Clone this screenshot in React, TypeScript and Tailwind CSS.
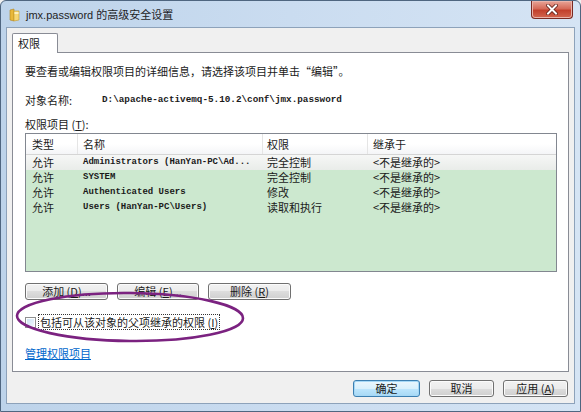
import React from "react";

const cjk = "font-['Noto_Sans_CJK_SC','Noto_Sans',sans-serif]";
const mono = "font-['Liberation_Mono','Noto_Sans_CJK_SC',monospace]";

const rows = [
  { type: "允许", name: "Administrators (HanYan-PC\\Ad...", perm: "完全控制", from: "<不是继承的>" },
  { type: "允许", name: "SYSTEM", perm: "完全控制", from: "<不是继承的>" },
  { type: "允许", name: "Authenticated Users", perm: "修改", from: "<不是继承的>" },
  { type: "允许", name: "Users (HanYan-PC\\Users)", perm: "读取和执行", from: "<不是继承的>" },
];

function WinButton({
  children,
  width,
  primary,
}: {
  children: React.ReactNode;
  width: string;
  primary?: boolean;
}) {
  return (
    <div
      className={`${width} h-[17px] rounded-[3px] border ${
        primary ? "border-[#3c7fb1] shadow-[inset_0_0_0_1px_#a6d8f6]" : "border-[#707070] shadow-[inset_0_0_0_1px_#fbfbfb]"
      } flex items-center justify-center text-[11px] leading-none text-[#1a1a1a] ${
        primary
          ? "bg-[linear-gradient(#eaf6fd_0%,#d9f0fc_50%,#bee6fd_50%,#a7d9f5_100%)]"
          : "bg-[linear-gradient(#f2f2f2_0%,#ebebeb_50%,#dddddd_50%,#cfcfcf_100%)]"
      }`}
    >
      {children}
    </div>
  );
}

function FolderIcon() {
  return (
    <svg width="12" height="14" viewBox="0 0 12 14">
      <path d="M1 2 L5 1 L5 13 L1 12 Z" fill="#e9b83a" stroke="#b08320" strokeWidth="0.6" />
      <path d="M5 3 L10 3 L10 12 L5 13 Z" fill="#f7d774" stroke="#c49a2c" strokeWidth="0.6" />
      <path d="M5.5 4 L9.5 4 L9.5 6 L5.5 6 Z" fill="#fdf0c0" />
    </svg>
  );
}

export default function App() {
  return (
    <div className={`w-[581px] h-[412px] overflow-hidden bg-[#f0f0f0] ${cjk}`}>
      <div className="w-full h-full flex flex-col rounded-t-[6px] border border-[#4f6680] bg-[linear-gradient(90deg,#bdd3ea_0%,#cadcf0_50%,#d5e4f4_100%)]">
        {/* title bar */}
        <div className="h-[26px] flex items-start justify-between shrink-0">
          <div className="flex items-center gap-[5px] pl-[8px] pt-[7px]">
            <FolderIcon />
            <span className="text-[11px] leading-none text-[#1e1e1e] font-['Liberation_Sans','Noto_Sans_CJK_SC',sans-serif]">
              jmx.password 的高级安全设置
            </span>
          </div>
          <div className="mr-[7px] w-[42px] h-[18px] rounded-b-[4px] border border-t-0 border-[#7a2a22] bg-[linear-gradient(#e8a598_0%,#d56a58_45%,#c2402c_55%,#d2664f_100%)] flex items-center justify-center shadow-[inset_0_0_0_1px_#eab4aa]">
            <svg width="12" height="11" viewBox="0 0 12 11">
              <path d="M2 1.5 L10 9.5 M10 1.5 L2 9.5" stroke="#5a1a12" strokeWidth="3.6" strokeLinecap="square" />
              <path d="M2 1.5 L10 9.5 M10 1.5 L2 9.5" stroke="#ffffff" strokeWidth="2" strokeLinecap="square" />
            </svg>
          </div>
        </div>

        {/* client area */}
        <div className="mx-[5px] flex-1 flex flex-col border border-[#8da2ba] bg-[#f0f0f0] px-[5px] pt-[5px]">
          {/* tab */}
          <div className="h-[20px] w-[46px] -mb-px z-10 rounded-t-[2px] border border-b-0 border-[#898c95] bg-white flex items-center pl-[5px] text-[11px] text-[#1a1a1a]">
            权限
          </div>
          {/* panel */}
          <div className="relative h-[320px] border border-[#898c95] bg-white pl-[12px] pr-[11px] text-[11px] text-[#1a1a1a]">
            <div className="mt-[10px] h-[16px] leading-[16px]">要查看或编辑权限项目的详细信息，请选择该项目并单击“编辑”。</div>
            <div className="mt-[13px] h-[16px] flex items-center">
              <span className="w-[77px]">对象名称:</span>
              <span className={`${mono} text-[9.3px] font-bold`}>{"D:\\apache-activemq-5.10.2\\conf\\jmx.password"}</span>
            </div>
            <div className="mt-[8px] h-[16px] leading-[16px]">
              权限项目 (<span className="underline">T</span>):
            </div>
            {/* list */}
            <div className="mt-[1px] h-[139px] border border-[#828790] bg-[#cce8cf] flex flex-col">
              <div className="h-[21px] shrink-0 flex items-center bg-[linear-gradient(#ffffff_0%,#ffffff_50%,#f4f5f7_100%)] border-b border-[#d5d5d5]">
                <div className="w-[52px] pl-[6px] h-full flex items-center border-r border-[#e5e5e5]">类型</div>
                <div className="w-[185px] pl-[5px] h-full flex items-center border-r border-[#e5e5e5]">名称</div>
                <div className="w-[105px] pl-[4px] h-full flex items-center border-r border-[#e5e5e5]">权限</div>
                <div className="pl-[5px] h-full flex items-center">继承于</div>
              </div>
              {rows.map((r, i) => (
                <div
                  key={i}
                  className={`h-[15px] flex items-center leading-none ${i === 0 ? "bg-[linear-gradient(#f6f7f6,#e9ece9)]" : ""}`}
                >
                  <div className="w-[52px] pl-[6px]">{r.type}</div>
                  <div className={`w-[185px] pl-[5px] ${mono} text-[9px] font-bold whitespace-pre`}>{r.name}</div>
                  <div className="w-[105px] pl-[4px]">{r.perm}</div>
                  <div className="pl-[5px]">{r.from}</div>
                </div>
              ))}
            </div>
            {/* add/edit/remove */}
            <div className="mt-[11px] flex gap-[9px]">
              <WinButton width="w-[83px]">
                添加 (<span className="underline">D</span>)...
              </WinButton>
              <WinButton width="w-[82px]">
                编辑 (<span className="underline">E</span>)...
              </WinButton>
              <WinButton width="w-[83px]">
                删除 (<span className="underline">R</span>)
              </WinButton>
            </div>
            {/* checkbox */}
            <div className="mt-[15px] h-[14px] flex items-center gap-[3px]">
              <div className="w-[11px] h-[11px] border border-[#8e8f8f] bg-white p-px">
                <div className="w-full h-full bg-[linear-gradient(135deg,#cfe3f5,#f0f7fd)]" />
              </div>
              <div className="h-[14px] flex items-center px-[1px] outline outline-1 outline-dotted outline-[#333]">
                包括可从该对象的父项继承的权限 (<span className="underline">I</span>)
              </div>
            </div>
            {/* link */}
            <div className="mt-[16px] h-[16px] leading-[16px]">
              <span className="text-[#0066cc] underline">管理权限项目</span>
            </div>
            {/* annotation ellipse */}
            <svg className="absolute left-0 top-[236px]" width="236" height="56" viewBox="0 0 236 56">
              <ellipse
                cx="117"
                cy="28"
                rx="113"
                ry="24"
                fill="none"
                stroke="#7b2280"
                strokeWidth="2.6"
                transform="rotate(0.6 117 28)"
              />
            </svg>
          </div>
          {/* bottom buttons */}
          <div className="mt-[8px] flex justify-end gap-[9px] pr-[1px]">
            <WinButton width="w-[67px]" primary>
              确定
            </WinButton>
            <WinButton width="w-[65px]">取消</WinButton>
            <WinButton width="w-[65px]">
              应用 (<span className="underline">A</span>)
            </WinButton>
          </div>
        </div>
        <div className="h-[7px] shrink-0" />
      </div>
    </div>
  );
}
